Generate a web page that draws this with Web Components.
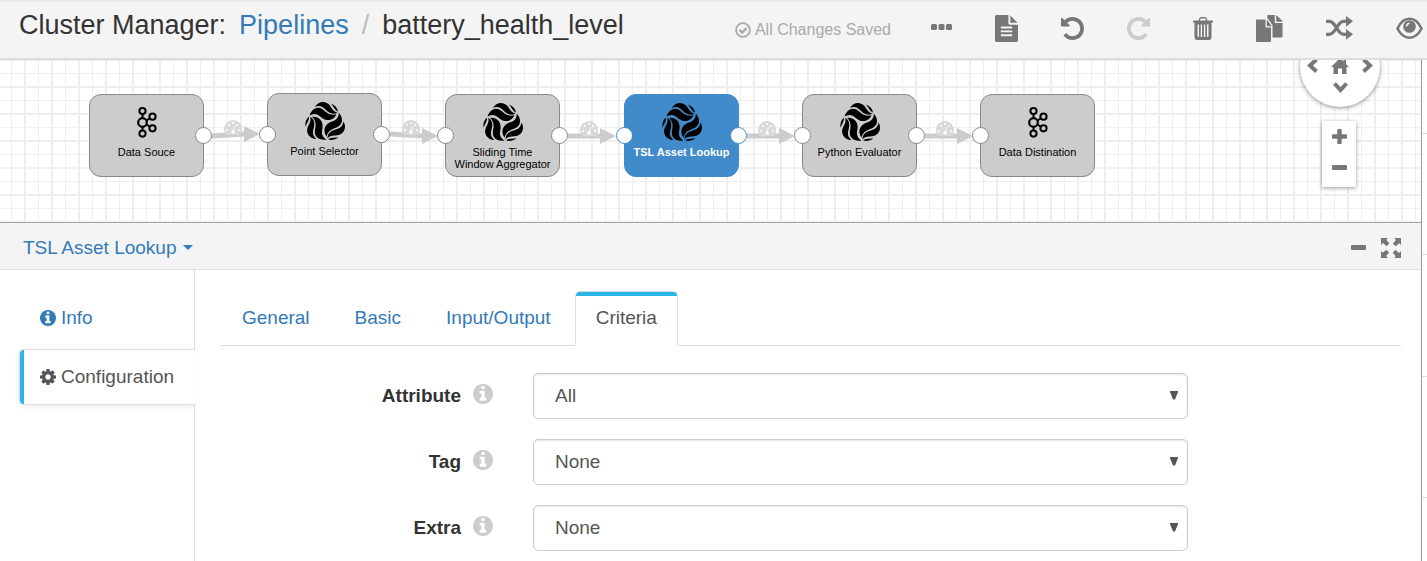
<!DOCTYPE html>
<html lang="en">
<head>
<meta charset="utf-8">
<title>Cluster Manager: battery_health_level</title>
<style>
  html, body { margin: 0; height: 100%; }
  body { font: 19px/28px "Liberation Sans", Arial, sans-serif; color: #333; background: #fff; overflow: hidden; }
</style>
</head>
<body>
<pipeline-app></pipeline-app>

<script>
const INFO = '<path d="M1152 1376v-160q0-14-9-23t-23-9h-96v-512q0-14-9-23t-23-9h-320q-14 0-23 9t-9 23v160q0 14 9 23t23 9h96v320h-96q-14 0-23 9t-9 23v160q0 14 9 23t23 9h448q14 0 23-9t9-23zm-128-896v-160q0-14-9-23t-23-9h-192q-14 0-23 9t-9 23v160q0 14 9 23t23 9h192q14 0 23-9t9-23zm640 416q0 209-103 385.5t-279.5 279.5-385.5 103-385.5-103-279.5-279.5-103-385.5 103-385.5 279.5-279.5 385.5-103 385.5 103 279.5 279.5 103 385.5z"/>';
const UNDO = '<path d="M1664 896q0 156-61 298t-164 245-245 164-298 61q-172 0-327-72.5t-264-204.5q-7-10-6.5-22.5t8.5-20.5l137-138q10-9 25-9 16 2 23 12 73 95 179 147t225 52q104 0 198.5-40.5t163.5-109.5 109.5-163.5 40.5-198.5-40.5-198.5-109.5-163.5-163.5-109.5-198.5-40.5q-98 0-188 35.5t-160 101.5l137 138q31 30 14 69-17 40-59 40h-448q-26 0-45-19t-19-45v-448q0-42 40-59 39-17 69 14l130 129q107-101 244.5-156.5t284.5-55.5q156 0 298 61t245 164 164 245 61 298z"/>';
const SWIRL = '<path d="M4.500 14.500C7 7.500 13 4.500 18.500 9C22 12 25 14.800 31.500 13.200C28 20.500 20.500 20.500 15.800 16C12.300 12.600 8.500 12 4.500 14.500Z"/><path d="M10 6C13 .2 20-.6 24 3.500C27 7 28 10.800 32.500 11.400C28.500 14 24.200 12.600 20.500 8.600C17 5 14 4.300 10 6Z"/><path d="M26 2.500C30 4 32.500 7 33 10.400C30 9.500 28.500 5.500 26 2.500Z"/>';

/* name: [viewBox, width, height, markup] */
const ICONS = {
  dots: ['0 0 21 26', 21, 26, '<rect y="9" width="6" height="6" rx="1.500"/><rect x="7.500" y="9" width="6" height="6" rx="1.500"/><rect x="15" y="9" width="6" height="6" rx="1.500"/>'],
  file: ['128 0 1536 1792', 23, 27, '<path d="M1596 476q14 14 28 36h-472v-472q22 14 36 28zm-476 164h544v1056q0 40-28 68t-68 28h-1344q-40 0-68-28t-28-68v-1600q0-40 28-68t68-28h800v544q0 40 28 68t68 28zm160 736v-64q0-14-9-23t-23-9h-704q-14 0-23 9t-9 23v64q0 14 9 23t23 9h704q14 0 23-9t9-23zm0-256v-64q0-14-9-23t-23-9h-704q-14 0-23 9t-9 23v64q0 14 9 23t23 9h704q14 0 23-9t9-23zm0-256v-64q0-14-9-23t-23-9h-704q-14 0-23 9t-9 23v64q0 14 9 23t23 9h704q14 0 23-9t9-23z"/>'],
  undo: ['128 128 1536 1536', 23, 23, UNDO],
  redo: ['128 128 1536 1536', 23, 23, '<g transform="matrix(-1 0 0 1 1792 0)">' + UNDO + '</g>'],
  trash: ['0 0 20 23', 20, 23, '<path d="M0 4.500Q0 3.500 1 3.500H5.500L6.500 1Q7 0 8 0H12Q13 0 13.500 1L14.500 3.500H19Q20 3.500 20 4.500V5.500H18.500V20Q18.500 23 16 23H4Q1.500 23 1.500 20V5.500H0ZM7 3.500H13L12.400 1.600H7.600ZM4.500 7.500V19Q4.500 20 5.200 20T6 19V7.500ZM7.700 7.500V20H9.100V7.500ZM10.900 7.500V20H12.300V7.500ZM14 7.500V19Q14 20 14.800 20T15.500 19V7.500Z" fill-rule="evenodd"/>'],
  copy: ['0 0 27 27', 27, 27, '<path d="M0 5.500Q0 4.500 1 4.500H9.500V12.500H15V26Q15 27 14 27H1Q0 27 0 26ZM10.800 4.500L15.300 10.500V11.300H10.800Z"/><path d="M11.300 0H18.800V8H26.500V21Q26.500 22.500 25.500 22.500H16.500V10L11.300 3ZM20.200 0L26.500 6V6.700H20.200Z"/>'],
  shuffle: ['0 0 27 24', 27, 24, '<g fill="none" stroke="currentColor" stroke-width="3.300"><path d="M0 5.300H3.500C10 5.300 11 18.300 17.500 18.300H21"/><path d="M0 18.300H3.500C10 18.300 11 5.300 17.500 5.300H21"/></g><path d="M20 0L27 5.300L20 10.800ZM20 12.900L27 18.300L20 23.700Z"/>'],
  eye: ['0 0 27 23', 27, 23, '<path d="M1.500 11.500Q6 1.800 13.500 1.800T25.500 11.500Q21 20.700 13.500 20.700T1.500 11.500Z" fill="none" stroke="currentColor" stroke-width="2.600"/><circle cx="13.500" cy="9.500" r="6.300"/><path d="M10.500 9.500Q10.500 6.700 13.500 6.200" fill="none" stroke="#f4f4f4" stroke-width="1.500"/>'],
  saved: ['0 0 16 16', 16, 16, '<circle cx="8" cy="8" r="6.900" fill="none" stroke="currentColor" stroke-width="1.800"/><path d="M4.500 7.800L7.200 10.500L11.600 6" fill="none" stroke="currentColor" stroke-width="2.400"/>'],
  info: ['128 128 1536 1536', 16, 16, INFO],
  help: ['128 128 1536 1536', 20, 20, INFO],
  gear: ['128 128 1536 1536', 16, 16, '<path d="M1152 896q0-106-75-181t-181-75-181 75-75 181 75 181 181 75 181-75 75-181zm512-109v222q0 12-8 23t-20 13l-185 28q-19 54-39 91 35 50 107 138 10 12 10 25t-9 23q-27 37-99 108t-94 71q-12 0-26-9l-138-108q-44 23-91 38-16 136-29 186-7 28-36 28h-222q-14 0-24.500-8.500t-11.500-21.500l-28-184q-49-16-90-37l-141 107q-10 9-25 9-14 0-25-11-126-114-165-168-7-10-7-23 0-12 8-23 15-21 51-66.500t54-70.500q-27-50-41-99l-183-27q-13-2-21-12.500t-8-23.500v-222q0-12 8-23t19-13l186-28q14-46 39-92-40-57-107-138-10-12-10-24 0-10 9-23 26-36 98.500-107.500t94.500-71.500q13 0 26 10l138 107q44-23 91-38 16-136 29-186 7-28 36-28h222q14 0 24.500 8.500t11.500 21.500l28 184q49 16 90 37l142-107q9-9 24-9 13 0 25 10 129 119 165 170 7 8 7 22 0 12-8 23-15 21-51 66.500t-54 70.500q26 50 41 98l183 28q13 2 21 12.500t8 23.500z"/>'],
  caret: ['0 0 10 5', 10, 5, '<path d="M0 0H10L5 5Z"/>'],
  drop: ['0 0 8 9', 8, 9, '<path d="M0 0H8V1L5 8.500H3L0 1Z"/>'],
  minus: ['0 0 15 15', 15, 15, '<rect y="5" width="15" height="5" rx="1"/>'],
  plus: ['0 0 15 15', 15, 15, '<path d="M6.300 0H8.700Q9.700 0 9.700 1V5.300H14Q15 5.300 15 6.300V8.700Q15 9.700 14 9.700H9.700V14Q9.700 15 8.700 15H6.300Q5.300 15 5.300 14V9.700H1Q0 9.700 0 8.700V6.300Q0 5.300 1 5.300H5.300V1Q5.300 0 6.300 0Z"/>'],
  expand: ['0 0 20 20', 20, 20, '<g id="q"><path d="M0 0H7L5.200 1.800L8.300 5.300L5.600 8.200L2 5L0 7Z"/></g><use href="#q" transform="rotate(90 10 10)"/><use href="#q" transform="rotate(180 10 10)"/><use href="#q" transform="rotate(270 10 10)"/>'],
  left: ['0 0 11 15', 11, 15, '<path d="M9.500 1.500L3 7.500L9.500 13.500" fill="none" stroke="currentColor" stroke-width="4"/>'],
  right: ['0 0 11 15', 11, 15, '<path d="M1.500 1.500L8 7.500L1.500 13.500" fill="none" stroke="currentColor" stroke-width="4"/>'],
  up: ['0 0 15 11', 15, 11, '<path d="M1.500 9.500L7.500 3L13.500 9.500" fill="none" stroke="currentColor" stroke-width="4"/>'],
  down: ['0 0 15 11', 15, 11, '<path d="M1.500 1.500L7.500 8L13.500 1.500" fill="none" stroke="currentColor" stroke-width="4"/>'],
  home: ['0 0 18 16', 18, 16, '<path d="M0 9L9 0L12.500 3.500V1H15V6L18 9H15.500V16H11V10.500H7V16H2.500V9Z"/>'],
  kafka: ['0 0 40 40', 40, 40, '<g fill="none" stroke="#000" stroke-width="2"><path d="M15.500 12V16M15.500 25V28.500M19.500 18.500L22.500 16.500M19.500 22.500L22.500 24.500"/><circle cx="15.500" cy="20.500" r="4.300" stroke-width="2.200"/><circle cx="15.500" cy="9" r="3.100"/><circle cx="15.500" cy="31.600" r="3.100"/><circle cx="25.500" cy="14.700" r="3.100"/><circle cx="25.500" cy="26.300" r="3.100"/></g>'],
  swirl: ['0 0 40 40', 40, 40, '<g fill="#000"><g>' + SWIRL + '</g><g transform="rotate(120 20 21.500)">' + SWIRL + '</g><g transform="rotate(240 20 21.500)">' + SWIRL + '</g></g>']
};

function define(name, html, setup) {
  const template = document.createElement('template');
  template.innerHTML = html;
  customElements.define(name, class extends HTMLElement {
    constructor() {
      super();
      this.attachShadow({ mode: 'open' }).append(template.content.cloneNode(true));
    }
    connectedCallback() {
      if (this.ready) return;
      this.ready = true;
      if (setup) setup(this, this.shadowRoot);
    }
  });
}

define('ui-icon', `
  <style>:host { display: inline-flex; flex: none; } svg { display: block; fill: currentColor; }</style>`,
  (el, root) => {
    const [box, w, h, body] = ICONS[el.getAttribute('name')];
    root.innerHTML += `<svg viewBox="${box}" width="${w}" height="${h}" aria-hidden="true">${body}</svg>`;
  });

define('app-header', `
  <style>
    :host { display: flex; align-items: center; box-sizing: border-box; min-height: 60px; padding: 0 4px 4px 19px;
      border-top: 2px solid #ebebeb; border-bottom: 2px solid #dcdcdc; background: #f4f4f4; position: relative; z-index: 1; }
    h1 { margin: 0; padding-bottom: 6px; flex: 1; display: flex; font-size: 27px; line-height: 32px; font-weight: 400; white-space: nowrap; }
    a { color: #337ab7; text-decoration: none; margin-left: 13px; }
    .sep { color: #bbb; padding: 0 13px; }
    .saved { display: flex; align-items: center; gap: 4px; padding-top: 4px; margin-right: 40px; font-size: 16px; line-height: 20px; color: #aaa; white-space: nowrap; }
    nav { display: flex; align-items: center; gap: 43px; color: #777; }
    button { display: flex; border: 0; padding: 0; background: none; color: inherit; }
    button:disabled { color: #ccc; }
  </style>
  <h1><span>Cluster Manager:</span><a href="#pipelines">Pipelines</a><span class="sep">/</span><span>battery_health_level</span></h1>
  <div class="saved"><ui-icon name="saved"></ui-icon><span>All Changes Saved</span></div>
  <nav aria-label="Pipeline actions">
    <button aria-label="More"><ui-icon name="dots"></ui-icon></button>
    <button aria-label="Notes"><ui-icon name="file"></ui-icon></button>
    <button aria-label="Undo"><ui-icon name="undo"></ui-icon></button>
    <button aria-label="Redo" disabled><ui-icon name="redo"></ui-icon></button>
    <button aria-label="Delete"><ui-icon name="trash"></ui-icon></button>
    <button aria-label="Duplicate"><ui-icon name="copy"></ui-icon></button>
    <button aria-label="Auto arrange"><ui-icon name="shuffle"></ui-icon></button>
    <button aria-label="Preview"><ui-icon name="eye"></ui-icon></button>
  </nav>`);

define('stage-node', `
  <style>
    :host { position: absolute; box-sizing: border-box; width: 115px; height: 83px; padding-top: 7px;
      display: flex; flex-direction: column; align-items: center; gap: 4px;
      border: 1px solid #888; border-radius: 12px; background: #ccc; --ring: #888;
      font-size: 11px; line-height: 12px; color: #000; text-align: center; white-space: pre-line; }
    :host([selected]) { background: #428bca; border-color: #428bca; --ring: #428bca; color: #fff; font-weight: 700; }
    i { position: absolute; top: 32px; width: 15px; height: 15px; border: 1px solid var(--ring); border-radius: 50%; background: #fff; }
    .in { left: -9px; } .out { right: -9px; }
    :host([first]) .in, :host([last]) .out { display: none; }
  </style><span><slot></slot></span><i class="in"></i><i class="out"></i>`,
  (el, root) => {
    el.style.left = el.getAttribute('x') + 'px';
    el.style.top = el.getAttribute('y') + 'px';
    const icon = document.createElement('ui-icon');
    icon.setAttribute('name', el.getAttribute('icon'));
    root.prepend(icon);
  });

define('pipeline-canvas', `
  <style>
    :host { display: block; position: relative; height: 162px; overflow: hidden; border-bottom: 1px solid #a5a5a5;
      background:
        linear-gradient(90deg, #eee 2px, transparent 2px 14px, #eee 14px 15px, transparent 15px) 24px 0 / 27px 27px,
        linear-gradient(#eee 2px, transparent 2px 14px, #eee 14px 15px, transparent 15px) 0 26px / 27px 27px, #fff; }
    .links { position: absolute; left: 0; top: 0; }
    button { display: flex; align-items: center; justify-content: center; border: 0; padding: 0; background: none; color: #777; }
    .pan { position: absolute; right: 41px; top: -33px; width: 80px; height: 80px; box-sizing: border-box; padding-bottom: 3px;
      display: grid; grid-template: repeat(3, 22px) / repeat(3, 22px); border-radius: 50%; background: #fff; box-shadow: 0 1px 4px rgba(0,0,0,.45);
      place-content: center; align-items: center; justify-items: center; }
    .pan .u { grid-area: 1 / 2; } .pan .l { grid-area: 2 / 1; } .pan .h { grid-area: 2 / 2; } .pan .r { grid-area: 2 / 3; } .pan .d { grid-area: 3 / 2; }
    .l { justify-self: start; } .r { justify-self: end; }
    .zoom { position: absolute; right: 65px; top: 61px; width: 34px; height: 66px; box-sizing: border-box; padding-bottom: 4px; display: grid; grid-auto-rows: 1fr; background: #fff; box-shadow: 0 1px 4px rgba(0,0,0,.4); }
    .zoom button { padding-right: 0; }
  </style>
  <svg class="links" width="1120" height="162" aria-hidden="true">
    <defs>
      <g id="gauge"><path d="M-7 7Q-9 5 -9 1A9 9 0 0 1 9 1Q9 5 7 7Z" fill="#d9d9d9"/>
        <g fill="#fff"><circle cx="-6" cy="2" r="1"/><circle cx="-4" cy="-3" r="1"/><circle cx="0" cy="-5" r="1"/><circle cx="4" cy="-3" r="1"/><circle cx="6" cy="2" r="1"/><circle cx="0" cy="4" r="1.800"/></g>
        <path d="M0 4L1.500 -2" stroke="#fff" stroke-width="1"/></g>
      <path id="head" d="M0 -8L16 0L0 8Z"/>
    </defs>
    <g stroke="#ccc" stroke-width="5"><path d="M211 76L244 74M390 74L425 76M568 76H601M747 76H780M925 76H957"/></g>
    <g fill="#ccc"><use href="#head" x="244" y="74"/><use href="#head" x="422" y="76"/><use href="#head" x="600" y="76"/><use href="#head" x="779" y="76"/><use href="#head" x="957" y="76"/></g>
    <use href="#gauge" x="233" y="68"/><use href="#gauge" x="411" y="68"/><use href="#gauge" x="589" y="69"/><use href="#gauge" x="767" y="69"/><use href="#gauge" x="945" y="69"/>
  </svg>
  <slot></slot>
  <div class="pan">
    <button class="u" aria-label="Pan up"><ui-icon name="up"></ui-icon></button>
    <button class="l" aria-label="Pan left"><ui-icon name="left"></ui-icon></button>
    <button class="h" aria-label="Home"><ui-icon name="home"></ui-icon></button>
    <button class="r" aria-label="Pan right"><ui-icon name="right"></ui-icon></button>
    <button class="d" aria-label="Pan down"><ui-icon name="down"></ui-icon></button>
  </div>
  <div class="zoom">
    <button aria-label="Zoom in"><ui-icon name="plus"></ui-icon></button>
    <button aria-label="Zoom out"><ui-icon name="minus"></ui-icon></button>
  </div>`);

define('panel-header', `
  <style>
    :host { display: flex; align-items: center; justify-content: space-between; box-sizing: border-box; height: 47px; padding: 3px 20px 0 23px; border-bottom: 1px solid #ddd; background: #f4f4f4; }
    button { display: flex; align-items: center; border: 0; padding: 0; background: none; font: inherit; color: #337ab7; gap: 6px; }
    div { display: flex; align-items: center; gap: 15px; }
    div button { color: #777; }
  </style>
  <button aria-haspopup="true"><slot></slot><ui-icon name="caret"></ui-icon></button>
  <div><button aria-label="Minimize"><ui-icon name="minus"></ui-icon></button><button aria-label="Full screen"><ui-icon name="expand"></ui-icon></button></div>`);

define('side-nav', `
  <style>
    :host { display: block; box-sizing: border-box; flex: none; width: 195px; padding: 20px 0 0 19px; border-right: 1px solid #ddd; }
    a { display: flex; align-items: center; gap: 5px; box-sizing: border-box; height: 56px; padding-left: 21px; color: #337ab7; text-decoration: none; }
    a + a { margin-top: 3px; }
    .on { margin-right: -1px; padding-left: 20px; border: 1px solid #ddd; border-right: 0; border-radius: 5px 0 0 5px; color: #555;
      background: linear-gradient(90deg, #29b5e6 4px, #fff 4px); box-shadow: -1px 2px 4px rgba(0,0,0,.08); }
  </style>
  <a href="#info"><ui-icon name="info"></ui-icon><span>Info</span></a>
  <a href="#configuration" class="on" aria-current="page"><ui-icon name="gear"></ui-icon><span>Configuration</span></a>`);

define('tab-bar', `
  <style>
    :host { display: flex; gap: 3px; border-bottom: 1px solid #ddd; }
    a { box-sizing: border-box; height: 55px; padding: 12px 20px; margin-bottom: -1px; border: 1px solid transparent; color: #337ab7; text-decoration: none; }
    .on { border-color: #ddd; border-bottom-color: #fff; border-radius: 5px 5px 0 0; background: linear-gradient(#29b5e6 4px, #fff 4px); color: #555; }
  </style>
  <a href="#general">General</a><a href="#basic">Basic</a><a href="#io">Input/Output</a><a href="#criteria" class="on" aria-current="page">Criteria</a>`);

define('select-field', `
  <style>
    :host { display: grid; grid-template-columns: 272fr 655fr 173fr; column-gap: 40px; align-items: center; }
    .name { display: flex; align-items: center; justify-content: flex-end; gap: 12px; font-weight: 700; }
    .name ui-icon { color: #ccc; padding-bottom: 4px; }
    .box { position: relative; }
    select { display: block; width: 100%; height: 46px; box-sizing: border-box; padding: 0 21px; margin: 0; appearance: none; font: inherit; color: #555;
      border: 1px solid #ccc; border-radius: 5px; background: #fff; box-shadow: inset 0 1px 2px rgba(0,0,0,.1); }
    .box ui-icon { position: absolute; right: 10px; top: 18px; color: #555; pointer-events: none; }
  </style>
  <div class="name"><label for="field"></label><ui-icon name="help"></ui-icon></div>
  <div class="box"><select id="field"><option></option></select><ui-icon name="drop"></ui-icon></div>`,
  (el, root) => {
    root.querySelector('label').textContent = el.getAttribute('label');
    root.querySelector('option').textContent = el.getAttribute('value');
  });

define('side-rail', `
  <style>
    :host { display: block; flex: none; width: 5px; border-left: 1px solid #999; }
    div { height: 73px; border-bottom: 1px solid #ddd; }
    div + div { height: 120px; }
    div + div + div { height: 121px; }
    div + div + div + div { height: 120px; }
  </style><div></div><div></div><div></div><div></div>`);

define('pipeline-app', `
  <style>
    :host { display: flex; flex-direction: column; min-height: 100%; }
    .work { display: flex; flex: 1; }
    .main { flex: 1; min-width: 0; display: flex; flex-direction: column; }
    .body { flex: 1; display: flex; }
    .config { flex: 1; min-width: 0; padding: 21px 20px 10px 26px; }
    form { display: grid; gap: 20px; padding-top: 27px; }
  </style>
  <app-header></app-header>
  <div class="work">
    <div class="main">
      <pipeline-canvas>
        <stage-node first x="89" y="34" icon="kafka">Data Souce</stage-node>
        <stage-node x="267" y="33" icon="swirl">Point Selector</stage-node>
        <stage-node x="445" y="34" icon="swirl">Sliding Time
Window Aggregator</stage-node>
        <stage-node selected x="624" y="34" icon="swirl">TSL Asset Lookup</stage-node>
        <stage-node x="802" y="34" icon="swirl">Python Evaluator</stage-node>
        <stage-node last x="980" y="34" icon="kafka">Data Distination</stage-node>
      </pipeline-canvas>
      <panel-header>TSL Asset Lookup</panel-header>
      <div class="body">
        <side-nav></side-nav>
        <div class="config">
          <tab-bar></tab-bar>
          <form>
            <select-field label="Attribute" value="All"></select-field>
            <select-field label="Tag" value="None"></select-field>
            <select-field label="Extra" value="None"></select-field>
          </form>
        </div>
      </div>
    </div>
    <side-rail></side-rail>
  </div>`);
</script>
</body>
</html>
